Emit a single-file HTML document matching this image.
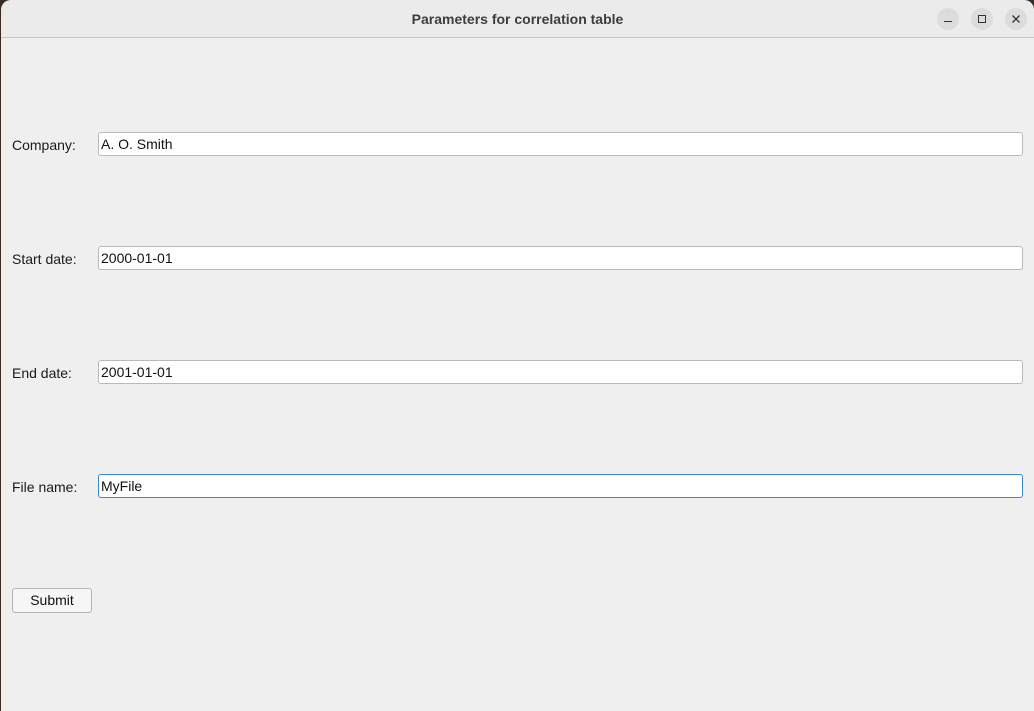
<!DOCTYPE html>
<html><head><meta charset="utf-8"><style>
html,body{margin:0;padding:0;width:1034px;height:711px;overflow:hidden;background:#3a2a24;font-family:"Liberation Sans","DejaVu Sans",sans-serif;}
.win{position:absolute;left:1px;top:0;width:1033px;height:711px;background:#efefef;border-radius:10px 10px 0 0;overflow:hidden;}
.tb{position:absolute;left:0;top:0;width:100%;height:37px;background:#ebebeb;border-bottom:1px solid #c6c6c6;}
.title{position:absolute;left:0;width:100%;top:11px;text-align:center;font-weight:bold;font-size:14px;color:#3d3d3d;}
.btn{position:absolute;top:8px;width:22px;height:22px;border-radius:50%;background:#dcdcdc;}
.lbl{position:absolute;left:11px;font-size:14px;color:#1a1a1a;}
.inp{position:absolute;left:97px;width:921px;height:22px;background:#fff;border:1px solid #b9b9b9;border-radius:3px;font-size:14px;color:#111;line-height:22px;padding-left:2px;}
.sub{position:absolute;left:11px;top:588px;width:78px;height:23px;border:1px solid #b5b5b5;border-radius:3px;background:#f6f6f6;font-size:14px;text-align:center;line-height:23px;color:#111;}
</style></head><body>
<div class="win">
<div class="tb"><div class="title">Parameters for correlation table</div>
<div class="btn" style="left:936px"><div style="position:absolute;left:7px;top:13px;width:8px;height:1px;background:#333"></div></div>
<div class="btn" style="left:970px"><div style="position:absolute;left:7px;top:7px;width:6px;height:6px;border:1px solid #333"></div></div>
<div class="btn" style="left:1004px"><svg width="22" height="22" style="position:absolute;left:0;top:0"><path d="M7.5 7.5L14.5 14.5M14.5 7.5L7.5 14.5" stroke="#333" stroke-width="1.3"/></svg></div>
</div>
<div class="lbl" style="top:137px">Company:</div><div class="inp" style="top:132px">A. O. Smith</div>
<div class="lbl" style="top:251px">Start date:</div><div class="inp" style="top:246px">2000-01-01</div>
<div class="lbl" style="top:365px">End date:</div><div class="inp" style="top:360px">2001-01-01</div>
<div class="lbl" style="top:479px">File name:</div><div class="inp" style="top:474px;border-color:#3584e4">MyFile</div>
<div class="sub">Submit</div>
</div>
</body></html>
